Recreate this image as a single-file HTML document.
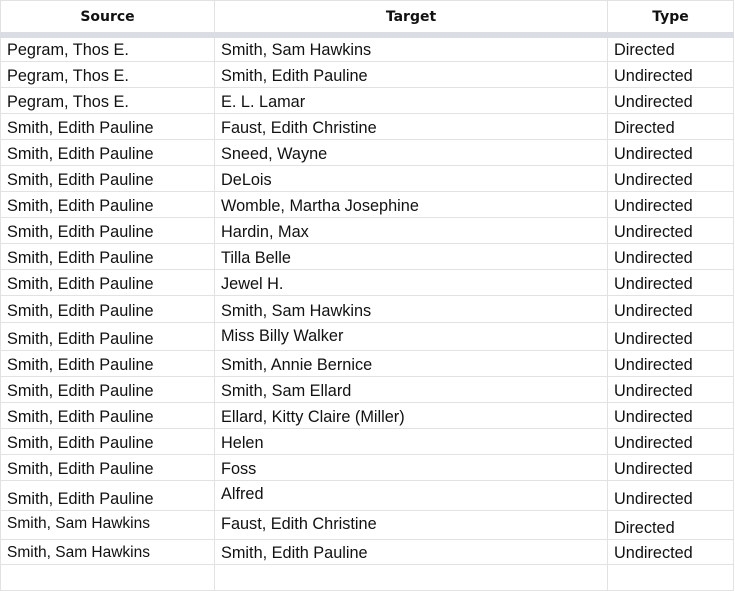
<!DOCTYPE html>
<html><head><meta charset="utf-8"><style>
body{margin:0;background:#fff;width:735px;height:569px;overflow:hidden;font-family:"Liberation Sans",Arial,sans-serif;}
table{border-collapse:collapse;table-layout:fixed;position:absolute;left:0;top:0;}
td,th{border:1px solid #e2e2e2;padding:0 0 2px 6px;font-size:16.3px;color:#111;vertical-align:bottom;white-space:nowrap;overflow:hidden;line-height:18px;}
th{font-family:"DejaVu Sans","Liberation Sans",sans-serif;font-weight:bold;font-size:14px;text-align:center;padding:0 0 6px 0;height:25px;border-bottom:6px solid #dadde3;color:#111;}
</style></head><body>
<table>
<colgroup><col style="width:214px"><col style="width:393px"><col style="width:126px"></colgroup>
<tr><th>Source</th><th>Target</th><th>Type</th></tr>
<tr style="height:26px"><td>Pegram, Thos E.</td><td>Smith, Sam Hawkins</td><td>Directed</td></tr>
<tr style="height:26px"><td>Pegram, Thos E.</td><td>Smith, Edith Pauline</td><td>Undirected</td></tr>
<tr style="height:26px"><td>Pegram, Thos E.</td><td>E. L. Lamar</td><td>Undirected</td></tr>
<tr style="height:26px"><td>Smith, Edith Pauline</td><td>Faust, Edith Christine</td><td>Directed</td></tr>
<tr style="height:26px"><td>Smith, Edith Pauline</td><td>Sneed, Wayne</td><td>Undirected</td></tr>
<tr style="height:26px"><td>Smith, Edith Pauline</td><td>DeLois</td><td>Undirected</td></tr>
<tr style="height:26px"><td>Smith, Edith Pauline</td><td>Womble, Martha Josephine</td><td>Undirected</td></tr>
<tr style="height:26px"><td>Smith, Edith Pauline</td><td>Hardin, Max</td><td>Undirected</td></tr>
<tr style="height:26px"><td>Smith, Edith Pauline</td><td>Tilla Belle</td><td>Undirected</td></tr>
<tr style="height:26px"><td>Smith, Edith Pauline</td><td>Jewel H.</td><td>Undirected</td></tr>
<tr style="height:27px"><td>Smith, Edith Pauline</td><td>Smith, Sam Hawkins</td><td>Undirected</td></tr>
<tr style="height:28px"><td>Smith, Edith Pauline</td><td style="padding-bottom:5px">Miss Billy Walker</td><td>Undirected</td></tr>
<tr style="height:26px"><td>Smith, Edith Pauline</td><td>Smith, Annie Bernice</td><td>Undirected</td></tr>
<tr style="height:26px"><td>Smith, Edith Pauline</td><td>Smith, Sam Ellard</td><td>Undirected</td></tr>
<tr style="height:26px"><td>Smith, Edith Pauline</td><td>Ellard, Kitty Claire (Miller)</td><td>Undirected</td></tr>
<tr style="height:26px"><td>Smith, Edith Pauline</td><td>Helen</td><td>Undirected</td></tr>
<tr style="height:26px"><td>Smith, Edith Pauline</td><td>Foss</td><td>Undirected</td></tr>
<tr style="height:30px"><td>Smith, Edith Pauline</td><td style="padding-bottom:7px">Alfred</td><td>Undirected</td></tr>
<tr style="height:29px"><td style="padding-bottom:6px;font-size:15.5px">Smith, Sam Hawkins</td><td style="padding-bottom:6px">Faust, Edith Christine</td><td>Directed</td></tr>
<tr style="height:25px"><td style="font-size:15.5px">Smith, Sam Hawkins</td><td>Smith, Edith Pauline</td><td>Undirected</td></tr>
<tr style="height:26px"><td></td><td></td><td></td></tr>
</table>
</body></html>
